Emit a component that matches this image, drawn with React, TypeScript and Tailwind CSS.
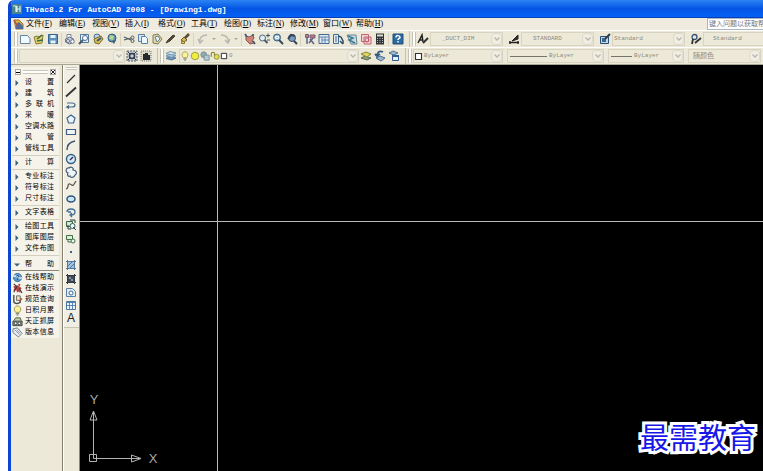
import type { ReactNode } from 'react';

const icons: Record<string, ReactNode> = {
  new: <path d="M1.5 2.5h7l2.5 3v5h-9.5z" fill="#f3faff" stroke="#6585a2" />,
  open: (
    <>
      <path d="M1 4l3-1 2 1 4-2-1 8-6 1z" fill="#e3ce6a" stroke="#837b3a" />
      <path d="M4 6l5-4M4 8l6-1" stroke="#376c45" strokeWidth="1.5" />
    </>
  ),
  save: (
    <>
      <path d="M1.5 1.5h9v9h-9z" fill="#5f8fbd" stroke="#35658f" />
      <path d="M3.5 2h5v3h-5zM3.5 7.5h5v3h-5z" fill="#e8f2fa" />
    </>
  ),
  plot: (
    <>
      <path d="M3 5V1.5h4V5" fill="#fff" stroke="#7a879b" />
      <path d="M1.5 6l4-2 4 2v3l-4 2-4-2z" fill="#c5cbd8" stroke="#65718a" />
      <circle cx="4" cy="8" r="1.5" fill="#fff" stroke="#65718a" />
      <circle cx="8.5" cy="8.5" r="1.8" fill="#fff" stroke="#65718a" />
    </>
  ),
  preview: (
    <>
      <path d="M2.5 1.5h8v8h-8z" fill="#e5f0fa" stroke="#55799d" />
      <circle cx="7" cy="5" r="2.5" fill="#fff" stroke="#476c92" />
      <path d="M5 7l-4 4" stroke="#47586d" strokeWidth="2" />
    </>
  ),
  publish: (
    <>
      <circle cx="5" cy="4" r="3" fill="#bad4e8" stroke="#496c91" />
      <path d="M2 6l7-3 2 3-4 5-4-1z" fill="#d8bd55" stroke="#776b33" />
      <path d="M5 8l4-3" stroke="#365a80" strokeWidth="2" />
    </>
  ),
  globe: (
    <>
      <circle cx="6" cy="5" r="4" fill="#5e99b0" stroke="#345a7d" />
      <path d="M4 2l4 1-1 4-4-1z" fill="#b6d49c" />
      <path d="M6 8l2 3 2-4" fill="#3d5870" />
    </>
  ),
  cut: (
    <>
      <path d="M1 4l7 3M1 7l7-2" stroke="#525b66" strokeWidth="1.3" />
      <circle cx="9.5" cy="4.5" r="1.5" stroke="#525b66" />
      <circle cx="9.5" cy="8" r="1.5" stroke="#525b66" />
    </>
  ),
  copy: (
    <>
      <path d="M1.5 1.5h6v7h-6z" fill="#d7e8f7" stroke="#5b80a8" />
      <path d="M4.5 3.5h4l2 2v5h-6z" fill="#eff7ff" stroke="#5b80a8" />
    </>
  ),
  paste: (
    <>
      <path d="M2 2l5-1 4 5-4 5-5-1z" fill="#dfd7a7" stroke="#827d62" />
      <path d="M4 4l3-1 2 3-3 3z" fill="#eaf2f6" stroke="#657f86" />
    </>
  ),
  match: <path d="M1 10l2-3 5-5 2 1-5 5z" fill="#57463a" stroke="#463c32" />,
  block: (
    <>
      <path d="M5 4l3 3-3 2-3-2z" fill="#d8b64a" stroke="#665b33" />
      <path d="M2.5 8.5h3v2h-3z" fill="#e8cf6b" stroke="#8b7433" />
      <path d="M10 1L6 5" stroke="#584b37" strokeWidth="2.5" />
    </>
  ),
  undo: <path d="M3 9C2 5 5 2 10 2M1 6l2 4 3-3" stroke="#b8b7b1" strokeWidth="1.5" />,
  redo: <path d="M2 2c5 0 8 3 7 7M11 6l-2 4-3-3" stroke="#b8b7b1" strokeWidth="1.5" />,
  pan: (
    <>
      <path d="M2 3l3 1 4-2 1 3-2 3 2 2-4 1-4-4z" fill="#cf8478" stroke="#8b5352" />
      <path d="M1 1l2 3M9 8l2 3M9 1v2" stroke="#475c78" strokeWidth="1.8" />
    </>
  ),
  zoomRt: (
    <>
      <circle cx="4.5" cy="5" r="3" fill="#e1edf3" stroke="#4d6880" />
      <path d="M6.5 7l3 3" stroke="#48566a" strokeWidth="2" />
      <path d="M8 2.5h4M10 .5v4M9 7h3" stroke="#485262" />
    </>
  ),
  zoomWin: (
    <>
      <circle cx="5" cy="4.5" r="3.5" fill="#8fb9d6" stroke="#3a5c7b" />
      <path d="M7 7l4 4" stroke="#34485e" strokeWidth="2" />
      <path d="M3.5 3.5h3v2h-3z" stroke="#fff" />
    </>
  ),
  zoomPrev: (
    <>
      <circle cx="6" cy="5" r="3.5" fill="#799bbd" stroke="#344d6b" />
      <path d="M8 8l3 3M2 6l3-4 4 1" stroke="#32435a" strokeWidth="2" />
    </>
  ),
  props: (
    <>
      <path d="M1.5 1.5h3v3h-3zM6 2h5v3H6z" fill="#c77a77" stroke="#725d80" />
      <path d="M3 4v7M6 6l4 5M9 5L5 10" stroke="#5b6485" strokeWidth="1.5" />
    </>
  ),
  grid: (
    <>
      <path d="M1 1.5h10v9H1z" fill="#dfeaf6" stroke="#45698f" />
      <path d="M1 4h10M4 4v7M7 4v7M4 7h7" stroke="#6587aa" />
    </>
  ),
  palette: (
    <>
      <path d="M1.5 1.5h5v9h-5z" fill="#dde9f3" stroke="#476b8d" />
      <path d="M3 4h2M3 6h2M3 8h2" stroke="#476b8d" />
      <path d="M6 3l3 1 2 4v3M8 8l3 3" stroke="#324e6a" strokeWidth="1.5" />
    </>
  ),
  sheet: (
    <>
      <path d="M1 2h9l1 9H5z" fill="#c8dbe4" stroke="#68849a" />
      <path d="M2 3l5 2-4 2 6 3" stroke="#427b87" strokeWidth="1.5" />
    </>
  ),
  markup: (
    <>
      <path d="M1.5 1.5h7v7h-7zM4 4h7v7H4z" fill="#f1d3d8" stroke="#bf6573" />
      <circle cx="7" cy="7" r="2" stroke="#c55d6b" />
    </>
  ),
  calc: (
    <>
      <path d="M2 .5h8v11H2z" fill="#303236" />
      <path d="M3 2.5h6" stroke="#d8e0d6" strokeWidth="2" />
      <path d="M3 5.5h6M3 7.5h6M3 9.5h6" stroke="#b9b9b9" strokeDasharray="1 1.5" />
    </>
  ),
  help: (
    <>
      <path d="M1 1h10v10H1z" fill="#2b6ba3" stroke="#244c79" />
      <path d="M4 4.5c0-3 4-2 4 0 0 1-2 1-2 2.5M6 8v1.5" stroke="#fff" strokeWidth="1.5" />
    </>
  ),
  textStyle: (
    <>
      <path d="M1 10L5 2l1 7M2 7h4" stroke="#222" strokeWidth="1.5" />
      <path d="M6 10l5-5" stroke="#333" strokeWidth="2" />
    </>
  ),
  dimStyle: (
    <>
      <path d="M1 9.5h10M2 8v3M10 8v3" stroke="#222" strokeWidth="1.3" />
      <path d="M4 8l6-6v4z" fill="#333" stroke="#222" />
    </>
  ),
  tableStyle: (
    <>
      <path d="M1.5 3.5h8v7h-8z" fill="#c2d9ec" stroke="#294e76" />
      <path d="M3 5h4v4H3z" fill="#3c688f" />
      <path d="M6 6l5-5" stroke="#303c49" strokeWidth="2" />
    </>
  ),
  leaderStyle: (
    <>
      <circle cx="4.5" cy="4" r="2.5" stroke="#35567a" strokeWidth="1.3" />
      <path d="M3 6l-1 5M5 10l6-5" stroke="#333" strokeWidth="1.8" />
    </>
  ),
  gear: (
    <>
      <path d="M1 1h10v10H1z" fill="#c6cbd0" stroke="#545e68" strokeDasharray="2 1" />
      <circle cx="6" cy="6" r="2.5" stroke="#303b48" strokeWidth="1.5" />
      <path d="M2 2l2 2M10 2L8 4M2 10l2-2M10 10L8 8" stroke="#303b48" />
    </>
  ),
  workspace: (
    <>
      <path d="M1 1h10v10H1z" fill="#dad8cb" stroke="#77766e" strokeDasharray="1 1" />
      <path d="M3 4h2V3h3v2h2v5H3z" fill="#27282a" />
    </>
  ),
  layers: (
    <>
      <path d="M1 8.5l4-2 6 1.5-4 2z" fill="#7396bb" stroke="#55789f" />
      <path d="M1 6l4-2 6 1.5-4 2z" fill="#a9c6dc" stroke="#6c8eae" />
      <path d="M1 3.5l4-2L11 3 7 5z" fill="#d0e3ed" stroke="#7798b3" />
    </>
  ),
  bulb: (
    <>
      <path d="M4 8C1 5 3 1 6 1s5 4 2 7z" fill="#fbf29b" stroke="#9c9448" />
      <path d="M4 9.5h4M5 11h2" stroke="#666" />
    </>
  ),
  sun: <circle cx="6" cy="6" r="4.5" fill="#eeee3b" stroke="#91913a" />,
  freeze: (
    <>
      <circle cx="4.5" cy="4.5" r="3.5" fill="#8faeb1" stroke="#728c92" />
      <path d="M5 5h6v6H5z" fill="#b5cbd2" stroke="#718c99" />
    </>
  ),
  lock: (
    <>
      <path d="M1.5 7V3c0-2 4-2 4 0v3" stroke="#8d9043" strokeWidth="1.5" />
      <circle cx="8" cy="7" r="3" fill="#e0df4b" stroke="#87883b" />
    </>
  ),
  swatch: <path d="M2 2h8v8H2z" fill="#fff" stroke="#333" strokeWidth="1.5" />,
  layerCur: (
    <>
      <path d="M1 8l4-2 6 2-4 2z" fill="#8e9f76" stroke="#5c6f58" />
      <path d="M1 4l5-2 5 2-4 3z" fill="#e1d65e" stroke="#8b853f" />
    </>
  ),
  layerPrev: (
    <>
      <path d="M2 8l4-2 5 2-4 3z" fill="#9db7cd" stroke="#47698d" />
      <path d="M9 2C5 0 3 3 3 6L1 4M3 6l3-2" stroke="#365982" strokeWidth="1.8" />
    </>
  ),
  layerState: (
    <>
      <path d="M1 3l4-2 5 2-4 2z" fill="#9ebbd2" stroke="#527594" />
      <path d="M4.5 5.5h6v5h-6z" fill="#e7f0f8" stroke="#315f91" />
      <path d="M4 6h7" stroke="#315f91" strokeWidth="2" />
    </>
  ),
  line: <path d="M2 10l8-8" stroke="#333" strokeWidth="1.2" />,
  xline: <path d="M1 10.5L11 1.5" stroke="#333" strokeWidth="1.8" />,
  pline: <path d="M2 4h5c4 0 4 4 0 4H2l2-1.5M2 8l2 1.5" stroke="#41688d" strokeWidth="1.2" />,
  polygon: <path d="M6 2l4 3-1.5 5h-5L2 5z" fill="#eaf5fb" stroke="#3e6789" strokeWidth="1.2" />,
  rect: <path d="M1.5 3.5h9v5h-9z" fill="#eef4f8" stroke="#415e7e" strokeWidth="1.2" />,
  arc: <path d="M2 11C2 6 5 3 10 2" stroke="#38536e" strokeWidth="1.4" />,
  circle: (
    <>
      <circle cx="6" cy="6" r="4.5" fill="#d6eaf6" stroke="#315d86" strokeWidth="1.4" />
      <path d="M5 7l3-3" stroke="#335" strokeWidth="1.5" />
    </>
  ),
  cloud: (
    <path
      d="M3 7C0 6 1 1 4 2c2-2 5 0 4 2 4 0 4 4 2 5-1 3-5 3-5 1-2 1-3-1-2-3z"
      fill="#eef4f7"
      stroke="#465c73"
      strokeWidth="1.2"
    />
  ),
  spline: <path d="M1 10c3 0 1-6 4-5s2 4 6-3" stroke="#5b4e48" strokeWidth="1.2" />,
  ellipse: <ellipse cx="6" cy="6" rx="4" ry="3" fill="#cce5f2" stroke="#2c547c" strokeWidth="1.5" />,
  ellipseArc: <path d="M2 6c0-4 8-4 8 0 0 2-2 3-4 3M3 6h3M7 7L5 9l2 2" stroke="#436b93" strokeWidth="1.3" />,
  insert: (
    <>
      <path d="M1.5 2.5h6v5h-6z" fill="#d5e8d4" stroke="#356842" />
      <circle cx="7.5" cy="7" r="2.5" fill="#f1f7f1" stroke="#365f62" />
      <path d="M3 6v4h3M8 8l3 3M5 1h5v3" stroke="#243f35" />
    </>
  ),
  makeBlock: (
    <>
      <path d="M1.5 2.5h6v4h-6z" fill="#dfefdc" stroke="#416e45" />
      <circle cx="8" cy="8" r="2" fill="#eef8ee" stroke="#416e45" />
      <path d="M3 7v2h3" stroke="#416e45" />
    </>
  ),
  point: <path d="M5 5h2v2H5z" fill="#346182" />,
  hatch: (
    <>
      <path d="M2.5 2.5h7v7h-7z" fill="#9fc4df" stroke="#3a678f" />
      <path d="M1 2.5h10M1 9.5h10M2.5 1v10M9.5 1v10M3 7l4-4M5 9l4-4" stroke="#54789a" />
    </>
  ),
  gradient: (
    <>
      <path d="M2 2h8v8H2z" fill="#3f4a56" />
      <path d="M1 2.5h10M1 9.5h10M2.5 1v10M9.5 1v10" stroke="#343942" />
      <path d="M4 4h2v2H4zM6 6h2v2H6z" fill="#8693a1" />
    </>
  ),
  region: (
    <>
      <path d="M1.5 2.5h6l3 3v5h-9z" fill="#deebf5" stroke="#587fa5" />
      <circle cx="6" cy="7" r="2" fill="#fff" stroke="#416b94" />
    </>
  ),
  table: (
    <>
      <path d="M1.5 2.5h9v8h-9z" fill="#eef6fc" stroke="#4977a2" />
      <path d="M1 3.5h10M4.5 3v7M7.5 3v7M2 6.5h8" stroke="#5687b4" />
    </>
  ),
  web: (
    <>
      <circle cx="6" cy="6" r="4.5" fill="#5f9dcc" stroke="#3a6c9c" />
      <path d="M1 5c3-3 7 4 10 1" stroke="#e4f1f9" strokeWidth="1.5" />
      <path d="M5 5c0-2 3-1 2 0L6 7v2" stroke="#204a72" />
    </>
  ),
  demo: (
    <>
      <path d="M6 3l2 1 2 2-2 1 1 3-2-1-1 1-1-3-3 1 1-2-1-2z" fill="#b6413f" stroke="#b6413f" />
      <path d="M2 1l3 3-3 6M8 6l3 5" stroke="#3d3735" strokeWidth="1.2" />
      <circle cx="8" cy="2" r="1.2" fill="#b6413f" />
    </>
  ),
  query: (
    <>
      <path d="M2 1v7c0 3 5 3 7 1V5" stroke="#4b4c48" strokeWidth="1.5" />
      <path d="M5 2h4v5H5z" fill="#ece2ac" stroke="#666" />
      <path d="M8 8l3-3" stroke="#b54d45" strokeWidth="1.5" />
    </>
  ),
  camera: (
    <>
      <path d="M2 5l2-3h5l1 3" fill="#c4d1a7" stroke="#4b5744" />
      <path d="M1 5.5h10v5H1z" fill="#919d8e" stroke="#39443e" />
      <circle cx="4" cy="8" r="1.5" fill="#fff" stroke="#343a38" />
      <circle cx="8" cy="8" r="1.5" fill="#fff" stroke="#343a38" />
    </>
  ),
  tag: (
    <>
      <path d="M1 2l5-1 5 6-4 4-6-5z" fill="#e5ebee" stroke="#6c7f8d" />
      <path d="M3 3l5 5M5 3l4 4" stroke="#8b9aa4" />
    </>
  ),
};

function Icon({ name, size = 'size-[12px]' }: { name: string; size?: string }) {
  return (
    <svg viewBox="0 0 12 12" fill="none" className={`${size} shrink-0`} aria-hidden="true">
      {icons[name]}
    </svg>
  );
}

function ToolButton({ name }: { name: string }) {
  return (
    <button aria-label={name} className="flex h-[13px] w-[14px] shrink-0 items-center justify-center">
      <Icon name={name} />
    </button>
  );
}

function Tools({ names }: { names: string[] }) {
  return (
    <div className="flex shrink-0">
      {names.map((name) => (
        <ToolButton key={name} name={name} />
      ))}
    </div>
  );
}

function Separator({ wide = false }: { wide?: boolean }) {
  return <div className={`${wide ? 'mr-[2px]' : 'mr-px'} ml-px h-[13px] w-px shrink-0 bg-[#d8d3bf]`} />;
}

function Grip() {
  return <div className="h-[14px] w-[4px] shrink-0 border-x border-x-[#c6c2b0] bg-white" />;
}

function BarEdge() {
  return <div className="mr-[2px] ml-[4px] h-[16px] w-px shrink-0 bg-[#c6c2b0]" />;
}

function Caret() {
  return (
    <button aria-label="history" className="flex w-[8px] shrink-0 items-center justify-center">
      <svg viewBox="0 0 4 2" className="h-[2px] w-[4px]" fill="#aaa89e">
        <path d="M0 0h4L2 2z" />
      </svg>
    </button>
  );
}

interface DropProps {
  label: string;
  value?: string;
  className: string;
  indent?: string;
  children?: ReactNode;
}

function Drop({ label, value = '', className, indent = 'pl-px', children }: DropProps) {
  return (
    <label className={`flex h-[14px] items-center border border-[#d9d4c1] bg-[#ece9d8] ${className}`}>
      {children}
      <select
        aria-label={label}
        className={`h-[12px] min-w-0 flex-1 appearance-none text-[6px] leading-[12px] text-[#8f8c80] outline-none ${indent}`}
      >
        <option>{value}</option>
      </select>
      <span className="flex h-[12px] w-[11px] shrink-0 items-center justify-center rounded-sm border border-[#dedacb] bg-[#f0eee3]">
        <svg viewBox="0 0 6 4" className="h-[4px] w-[6px]" fill="none" stroke="#bab7aa" strokeWidth="1.3">
          <path d="M.5.5L3 3 5.5.5" />
        </svg>
      </span>
    </label>
  );
}

const menus = [
  ['文件', 'F'],
  ['编辑', 'E'],
  ['视图', 'V'],
  ['插入', 'I'],
  ['格式', 'O'],
  ['工具', 'T'],
  ['绘图', 'D'],
  ['标注', 'N'],
  ['修改', 'M'],
  ['窗口', 'W'],
  ['帮助', 'H'],
];

const groups = [
  ['设置', '建筑', '多联机', '采暖', '空调水路', '风管', '管线工具'],
  ['计算'],
  ['专业标注', '符号标注', '尺寸标注'],
  ['文字表格'],
  ['绘图工具', '图库图层', '文件布图'],
];

const helpItems = [
  ['web', '在线帮助'],
  ['demo', '在线演示'],
  ['query', '规范查询'],
  ['bulb', '日积月累'],
  ['camera', '天正抓屏'],
  ['tag', '版本信息'],
];

const drawTools = [
  'line', 'xline', 'pline', 'polygon', 'rect', 'arc', 'circle', 'cloud', 'spline', 'ellipse',
  'ellipseArc', 'insert', 'makeBlock', 'point', 'hatch', 'gradient', 'region', 'table',
];

function SideItem({ text, marker }: { text: string; marker: ReactNode }) {
  return (
    <button className="flex h-[11px] w-full items-center">
      <span className="flex w-[13px] shrink-0 items-center justify-start">{marker}</span>
      <span className="w-[29px] text-[7px] leading-[11px] whitespace-nowrap [text-align-last:justify]">
        {text}
      </span>
    </button>
  );
}

function Arrow({ open = false }: { open?: boolean }) {
  return (
    <svg viewBox="0 0 6 6" className="ml-[2px] size-[6px]" fill="#3b6179">
      <path d={open ? 'M0 1.5h6L3 4.5z' : 'M1.5 0v6L4.5 3z'} />
    </svg>
  );
}

function SidePanel() {
  return (
    <aside className="w-[52px] shrink-0 border-r border-[#85806f] bg-[#ece9d8] pt-[2px]">
      <div className="mr-[3px] bg-[#f5f3ea] pl-px">
        <div className="flex h-[10px] items-center gap-[2px] px-[3px]">
          <button aria-label="collapse" className="flex size-[6px] items-center justify-center border border-[#aaa89c] bg-white">
            <span className="h-px w-[4px] bg-black" />
          </button>
          <div className="h-[4px] flex-1 border-y border-[#c9c5b4] bg-white" />
          <button aria-label="close" className="flex size-[6px] items-center justify-center border border-[#aaa89c] bg-white">
            <svg viewBox="0 0 4 4" className="size-[4px]" stroke="#222">
              <path d="M0 0l4 4M4 0L0 4" />
            </svg>
          </button>
        </div>
        {groups.map((items) => (
          <div key={items[0]} className="mb-px border-b border-[#d3cfbe] pb-px">
            {items.map((text) => (
              <SideItem key={text} text={text} marker={<Arrow />} />
            ))}
          </div>
        ))}
        <div className="mb-px border-b border-[#8b8877] pt-[2px]">
          <SideItem text="帮助" marker={<Arrow open />} />
        </div>
        {helpItems.map(([icon, text]) => (
          <SideItem key={text} text={text} marker={<Icon name={icon} size="size-[11px]" />} />
        ))}
      </div>
    </aside>
  );
}

function DrawToolbar() {
  return (
    <div className="w-[17px] shrink-0 border-r border-[#8c8878] border-l border-l-white bg-[#ece9d8]">
      <div className="border-b border-[#c9c5b5] bg-[#f1efe4] pt-[2px] pb-[2px]">
        <div className="mx-[2px] mb-[2px] h-[3px] border-y border-[#c9c5b4] bg-white" />
        <div className="[&>*:nth-child(3n)]:mb-px">
          {drawTools.map((name) => (
            <ToolButton key={name} name={name} />
          ))}
          <button
            aria-label="mtext"
            className="flex h-[13px] w-[14px] items-center justify-center font-['Liberation_Sans',sans-serif] text-[12px] leading-[13px] text-[#222]"
          >
            A
          </button>
        </div>
      </div>
    </div>
  );
}

function Canvas() {
  return (
    <main className="relative flex-1 overflow-hidden bg-black">
      <div className="absolute inset-y-0 left-[137px] w-px bg-[#b9b9b9]" />
      <div className="absolute inset-x-0 top-[156px] h-px bg-[#b9b9b9]" />
      <svg
        viewBox="0 0 80 81"
        className="absolute bottom-0 left-[4px] h-[81px] w-[80px] font-['Liberation_Sans',sans-serif] text-[13px]"
        fill="none"
        stroke="#b4b4b4"
      >
        <path d="M5.5 64.5h7v7h-7zM9.5 68.5V21M9.5 68.5H57" />
        <path d="M9.5 21l-3.5 9h7zM57 68.5l-9.5-3.5v7z" />
        <text x="10" y="14" textAnchor="middle" fill="#a8a8a8" stroke="none">
          Y
        </text>
        <text x="69" y="73" textAnchor="middle" fill="#a8a8a8" stroke="none">
          X
        </text>
      </svg>
      <p className="absolute right-[7px] bottom-[8px] text-[29px] leading-[42px] font-normal text-[#1717e8] [-webkit-text-stroke:6px_white] [paint-order:stroke_fill]">
        最需教育
      </p>
    </main>
  );
}

export default function App() {
  return (
    <div className="flex min-h-screen bg-white pl-[8px] font-['Liberation_Mono','Noto_Sans_CJK_SC',monospace] text-black">
      <div className="flex min-w-0 flex-1 flex-col overflow-hidden rounded-tl-md border-l-3 border-[#0b45d6] bg-[#ece9d8]">
        <header className="flex h-[18px] items-center gap-[3px] border-b border-[#0840b8] bg-linear-to-b from-[#2b83f2] via-[#0455e5] to-[#0560f5] pl-px">
          <svg viewBox="0 0 10 10" className="size-[10px]" fill="none">
            <path d="M0 0h10v10H0z" fill="#48838f" />
            <path d="M1 2h3v6M5 2v6M8 2v6M5 5h3" stroke="#d9f0ec" strokeWidth="1.2" />
          </svg>
          <h1 className="pt-[2px] text-[8px] leading-[14px] font-bold whitespace-nowrap text-white">
            THvac8.2 For AutoCAD 2008 - [Drawing1.dwg]
          </h1>
        </header>

        <div className="flex h-[12px] items-center bg-[#efecdf]">
          <svg viewBox="0 0 11 11" className="mx-[2px] size-[11px] shrink-0" fill="none">
            <path d="M1 1h5l4 4v5H3z" fill="#e1b53f" stroke="#987132" />
            <path d="M3 5l3-2 4 4v3H3z" fill="#506c9b" />
            <path d="M1 1l4 7" stroke="#b55242" strokeWidth="1.5" />
          </svg>
          <nav className="flex">
            {menus.map(([text, key]) => (
              <button
                key={key}
                className="w-[33px] text-left font-['Liberation_Serif','Noto_Sans_CJK_SC',serif] text-[8px] leading-[12px] whitespace-nowrap"
              >
                {text}(<span className="underline">{key}</span>)
              </button>
            ))}
          </nav>
          <input
            aria-label="键入问题以获取帮助"
            placeholder="键入问题以获取帮助"
            className="ml-auto h-[12px] w-[56px] border border-r-0 border-[#a9b5c2] bg-white pl-px text-[7px] leading-[10px] outline-none placeholder:text-[#777]"
          />
        </div>

        <div className="flex h-[17px] items-center border-t border-white pl-[3px]">
          <Grip />
          <Tools names={['new', 'open', 'save']} />
          <Separator />
          <Tools names={['plot', 'preview', 'publish', 'globe']} />
          <Separator />
          <Tools names={['cut', 'copy', 'paste', 'match', 'block']} />
          <Separator wide />
          <Tools names={['undo']} />
          <Caret />
          <Tools names={['redo']} />
          <Caret />
          <Separator />
          <Tools names={['pan', 'zoomRt', 'zoomWin', 'zoomPrev']} />
          <Separator wide />
          <Tools names={['props', 'grid', 'palette', 'sheet', 'markup', 'calc']} />
          <Separator wide />
          <Tools names={['help']} />
          <BarEdge />
          <Grip />
          <Tools names={['textStyle']} />
          <Drop label="文字样式" value="_DUCT_DIM" className="mr-[4px] w-[73px] shrink-0" indent="pl-[11px]" />
          <Tools names={['dimStyle']} />
          <Drop label="标注样式" value="STANDARD" className="mr-[4px] w-[73px] shrink-0" indent="pl-[11px]" />
          <Tools names={['tableStyle']} />
          <Drop label="表格样式" value="Standard" className="mr-[4px] w-[73px] shrink-0" />
          <Tools names={['leaderStyle']} />
          <Drop label="引线样式" value="Standard" className="w-[73px] shrink-0" indent="pl-[9px]" />
        </div>

        <div className="flex h-[18px] items-center border-t border-b border-t-white border-b-[#aaa694] pl-[3px]">
          <Grip />
          <Drop label="工作空间" className="ml-px w-[106px] shrink-0" />
          <Tools names={['gear', 'workspace']} />
          <BarEdge />
          <Grip />
          <Tools names={['layers']} />
          <Drop label="图层" value="0" className="ml-px w-[180px] shrink-0">
            <Icon name="bulb" size="size-[10px]" />
            <Icon name="sun" size="size-[10px]" />
            <Icon name="freeze" size="size-[10px]" />
            <Icon name="lock" size="size-[10px]" />
            <Icon name="swatch" size="size-[8px]" />
          </Drop>
          <Tools names={['layerCur', 'layerPrev', 'layerState']} />
          <BarEdge />
          <Grip />
          <Drop label="颜色" value="ByLayer" className="mr-[4px] ml-px w-[90px] shrink-0" indent="pl-px">
            <Icon name="swatch" size="size-[9px]" />
          </Drop>
          <Drop label="线型" value="ByLayer" className="mr-[4px] w-[97px] shrink-0 pl-[2px]">
            <span className="mr-px h-px w-[37px] bg-[#77746a]" />
          </Drop>
          <Drop label="线宽" value="ByLayer" className="mr-[4px] w-[76px] shrink-0 pl-[2px]">
            <span className="mr-px h-px w-[21px] bg-[#77746a]" />
          </Drop>
          <Drop label="打印样式" value="随颜色" className="mr-[2px] min-w-0 flex-1" indent="pl-[4px] text-[7px]" />
        </div>

        <div className="flex flex-1">
          <SidePanel />
          <DrawToolbar />
          <Canvas />
        </div>
      </div>
    </div>
  );
}
